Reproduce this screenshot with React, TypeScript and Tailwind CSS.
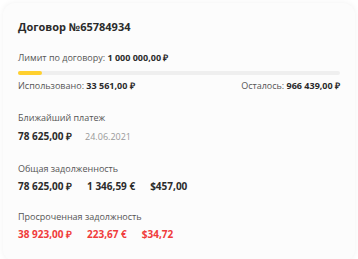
function Amount({ children, red }: { children: React.ReactNode; red?: boolean }) {
  return (
    <span className={`text-[10px] font-bold ${red ? "text-[#f03b3b]" : "text-[#2b2b2b]"}`}>
      {children}
    </span>
  )
}

export default function App() {
  return (
    <div className="h-[259px] w-[358px] overflow-hidden bg-white px-[3px] pt-[3px] font-['Open_Sans',sans-serif]">
      <div className="rounded-xl bg-[#fcfcfc] px-[15px] pb-[20px] pt-[16px] shadow-[0_0_6px_rgba(0,0,0,0.06)]">
        <h2 className="text-[11px] font-bold leading-[16px] text-[#2b2b2b]">
          Договор №65784934
        </h2>

        <p className="mt-[17px] text-[9px] leading-[12px] text-[#555]">
          Лимит по договору: <span className="font-bold text-[#2b2b2b]">1 000 000,00 ₽</span>
        </p>

        <div className="mt-[7px] h-[4px] w-full rounded-full bg-[#efefef]">
          <div className="h-full w-[24px] rounded-full bg-[#ffd02e]" />
        </div>

        <div className="mt-[5px] flex justify-between text-[9px] leading-[12px] text-[#555]">
          <span>
            Использовано: <span className="font-bold text-[#2b2b2b]">33 561,00 ₽</span>
          </span>
          <span>
            Осталось: <span className="font-bold text-[#2b2b2b]">966 439,00 ₽</span>
          </span>
        </div>

        <p className="mt-[20px] text-[9px] leading-[12px] text-[#555]">Ближайший платеж</p>
        <div className="mt-[5px] flex items-baseline gap-[13px] leading-[14px]">
          <Amount>78 625,00 ₽</Amount>
          <span className="text-[9px] text-[#999]">24.06.2021</span>
        </div>

        <p className="mt-[19px] text-[9px] leading-[12px] text-[#555]">Общая задолженность</p>
        <div className="mt-[4px] flex gap-[15px] leading-[14px]">
          <Amount>78 625,00 ₽</Amount>
          <Amount>1 346,59 €</Amount>
          <Amount>$457,00</Amount>
        </div>

        <p className="mt-[18px] text-[9px] leading-[12px] text-[#555]">Просроченная задолжность</p>
        <div className="mt-[4px] flex gap-[15px] leading-[14px]">
          <Amount red>38 923,00 ₽</Amount>
          <Amount red>223,67 €</Amount>
          <Amount red>$34,72</Amount>
        </div>
      </div>
    </div>
  )
}
